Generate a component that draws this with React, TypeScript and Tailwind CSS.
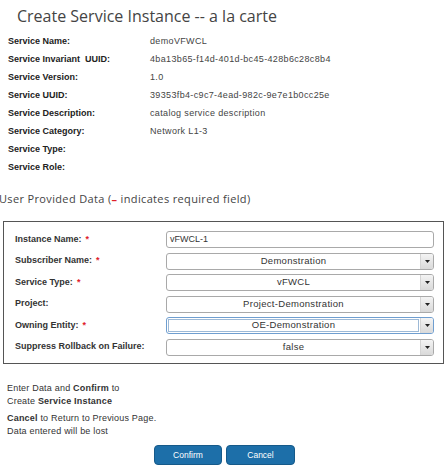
import React from 'react';

const info: [string, string][] = [
  ['Service Name:', 'demoVFWCL'],
  ['Service Invariant  UUID:', '4ba13b65-f14d-401d-bc45-428b6c28c8b4'],
  ['Service Version:', '1.0'],
  ['Service UUID:', '39353fb4-c9c7-4ead-982c-9e7e1b0cc25e'],
  ['Service Description:', 'catalog service description'],
  ['Service Category:', 'Network L1-3'],
  ['Service Type:', ''],
  ['Service Role:', ''],
];

type Field = { label: string; required?: boolean; value: string; select?: boolean; focus?: boolean };

const fields: Field[] = [
  { label: 'Instance Name:', required: true, value: 'vFWCL-1' },
  { label: 'Subscriber Name:', required: true, value: 'Demonstration', select: true },
  { label: 'Service Type:', required: true, value: 'vFWCL', select: true },
  { label: 'Project:', value: 'Project-Demonstration', select: true },
  { label: 'Owning Entity:', required: true, value: 'OE-Demonstration', select: true, focus: true },
  { label: 'Suppress Rollback on Failure:', value: 'false', select: true },
];

function Input({ f }: { f: Field }) {
  const border = f.focus ? 'border-[#6f9ed0]' : 'border-[#a9a9a9]';
  if (!f.select) {
    return (
      <div className={`w-[268px] h-[17px] border ${border} rounded-[3px] bg-white flex items-center px-[3px] text-[9px] text-[#333]`}>
        {f.value}
      </div>
    );
  }
  return (
    <div className={`w-[268px] h-[17px] border ${border} rounded-[3px] bg-white flex items-stretch`}>
      <div className="flex-1 flex p-[1px]">
        <div
          className={`flex-1 flex items-center justify-center text-[9.5px] tracking-[0.3px] text-[#333] ${
            f.focus ? 'border border-[#9db9d6]' : ''
          }`}
        >
          {f.value}
        </div>
      </div>
      <div className="w-[13px] border-l border-[#d4d4d4] bg-gradient-to-b from-[#f4f4f4] to-[#d9d9d9] rounded-r-[2px] flex items-center justify-center">
        <svg width="5" height="3" viewBox="0 0 5 3">
          <path d="M0 0h5L2.5 3z" fill="#222" />
        </svg>
      </div>
    </div>
  );
}

export default function App() {
  return (
    <div
      className="w-[448px] h-[470px] bg-white overflow-hidden text-[#333]"
      style={{ fontFamily: '"Liberation Sans", Arial, sans-serif' }}
    >
      {/* Title */}
      <div
        className="pl-[17px] pt-[4px] h-[33px] text-[16px] text-[#444]"
        style={{ fontFamily: '"Open Sans", sans-serif' }}
      >
        Create Service Instance -- a la carte
      </div>

      {/* Service info */}
      <div className="flex flex-col pl-[8px]">
        {info.map(([k, v]) => (
          <div key={k} className="h-[18px] flex items-center">
            <span className="w-[142px] font-bold text-[9px] text-[#222] whitespace-pre">{k}</span>
            <span className="text-[9px] tracking-[0.35px] text-[#444]">{v}</span>
          </div>
        ))}
      </div>

      {/* User provided data */}
      <div
        className="h-[44px] flex items-center -ml-[1px] text-[11px] tracking-[0.35px] text-[#444]"
        style={{ fontFamily: '"Open Sans", sans-serif' }}
      >
        User Provided Data (<span className="text-[#e0202a] font-bold">–</span>&nbsp;indicates required field)
      </div>

      <div className="ml-[3px] w-[441px] h-[143px] border border-[#555] pl-[11px] pr-[9px] pt-[9px] flex flex-col gap-[4.5px]">
        {fields.map((f) => (
          <div key={f.label} className="flex items-center justify-between">
            <span className="font-bold text-[9px] text-[#333]">
              {f.label}
              {f.required && <span className="text-[#e0202a] ml-[4px]">*</span>}
            </span>
            <Input f={f} />
          </div>
        ))}
      </div>

      {/* Footer text */}
      <div className="pl-[7px] pt-[18px] text-[9px] tracking-[0.2px] text-[#333] leading-[13px]">
        <div>
          Enter Data and <b>Confirm</b> to
        </div>
        <div>
          Create <b>Service Instance</b>
        </div>
        <div className="mt-[4px]">
          <b>Cancel</b> to Return to Previous Page.
        </div>
        <div>Data entered will be lost</div>
      </div>

      <div className="flex justify-center gap-[4px] mt-[7px] pl-[1px]">
        <button className="w-[68px] h-[20px] rounded-[4px] bg-[#1d6fa9] border border-[#165a8a] text-white text-[8.5px]">
          Confirm
        </button>
        <button className="w-[69px] h-[20px] rounded-[4px] bg-[#1d6fa9] border border-[#165a8a] text-white text-[8.5px]">
          Cancel
        </button>
      </div>
    </div>
  );
}
